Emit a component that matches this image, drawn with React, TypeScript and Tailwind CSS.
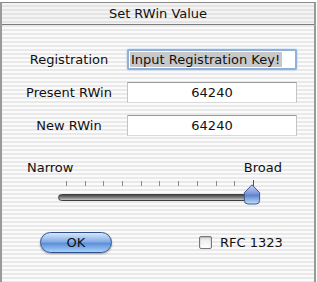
import React from "react";

const font = { fontFamily: '"DejaVu Sans", "Liberation Sans", sans-serif' };

function Field({ value, focused }: { value: string; focused?: boolean }) {
  if (focused) {
    return (
      <div className="h-[21px] w-[170px] rounded-[2px] border-2 border-[#8fb0dc] bg-white p-[1px] shadow-[0_0_2px_#9cc0ee]">
        <div className="flex h-full items-center">
          <span className="bg-[#c8c8c8] pl-[1px] pr-[2px] leading-[15px] text-[13px] text-[#111]">
            {value}
          </span>
        </div>
      </div>
    );
  }
  return (
    <div className="flex h-[21px] w-[170px] items-center justify-center border border-t-[#9a9a9a] border-x-[#c4c4c4] border-b-[#dadada] bg-white text-[13px] text-[#111]">
      {value}
    </div>
  );
}

function Thumb() {
  return (
    <svg width="18" height="21" viewBox="0 0 18 21">
      <defs>
        <linearGradient id="tg" x1="0" y1="0" x2="0" y2="1">
          <stop offset="0" stopColor="#c9d6f2" />
          <stop offset="0.45" stopColor="#7d98d9" />
          <stop offset="0.55" stopColor="#5f82cf" />
          <stop offset="1" stopColor="#bfe3fb" />
        </linearGradient>
      </defs>
      <path
        d="M9 0.8 L16.6 8.6 L16.6 16.5 Q16.6 20 13 20 L5 20 Q1.4 20 1.4 16.5 L1.4 8.6 Z"
        fill="url(#tg)"
        stroke="#3c5a8e"
        strokeWidth="1"
      />
    </svg>
  );
}

export default function App() {
  const ticks = Array.from({ length: 11 });
  return (
    <div
      className="h-[282px] w-[317px] overflow-hidden bg-white pt-[2px] text-[13px] text-[#111]"
      style={font}
    >
      <div className="mr-[1px] flex h-[280px] flex-col border-x-2 border-t border-x-[#9a9a9a] border-t-[#8a8a8a] bg-[repeating-linear-gradient(to_bottom,#fbfbfb_0px,#fbfbfb_2px,#e9e9e9_2px,#e9e9e9_4px)]">
        <div className="flex h-[22px] items-center justify-center border-b border-[#7a7a7a] bg-[repeating-linear-gradient(to_bottom,#f4f4f4_0px,#f4f4f4_2px,#e4e4e4_2px,#e4e4e4_4px)] pt-[1px]">
          Set RWin Value
        </div>

        <div className="flex flex-col gap-[12px] pt-[24px]">
          <div className="flex items-center">
            <div className="w-[125px] pl-[9px] text-center">Registration</div>
            <Field value="Input Registration Key!" focused />
          </div>
          <div className="flex items-center">
            <div className="w-[125px] pl-[9px] text-center">Present RWin</div>
            <Field value="64240" />
          </div>
          <div className="flex items-center">
            <div className="w-[125px] pl-[9px] text-center">New RWin</div>
            <Field value="64240" />
          </div>
        </div>

        <div className="mt-[24px] flex justify-between pl-[25px] pr-[32px] leading-[16px]">
          <span>Narrow</span>
          <span>Broad</span>
        </div>

        <div className="relative ml-[56px] mt-[4px] h-[26px] w-[206px]">
          <div className="ml-[8px] flex w-[188px] justify-between">
            {ticks.map((_, i) => (
              <div
                key={i}
                className={
                  i === 10 ? "h-[7px] w-[1px] bg-[#555]" : "mt-[1px] h-[5px] w-[1px] bg-[#8a8a8a]"
                }
              />
            ))}
          </div>
          <div className="mt-[7px] h-[7px] w-[196px] rounded-full border border-[#3e3e3e] bg-[linear-gradient(to_bottom,#4a4a4a,#8a8a8a_60%,#c8c8c8)]" />
          <div className="absolute left-[185px] top-[4px]">
            <Thumb />
          </div>
        </div>

        <div className="mt-[26px] flex items-center">
          <div className="ml-[38px] flex h-[21px] w-[72px] items-center justify-center rounded-full border border-[#2f4f8a] bg-[linear-gradient(to_bottom,#d6e6fb_0%,#86aee6_45%,#5d8fdc_55%,#a6d3f8_100%)] shadow-[0_1px_2px_rgba(0,0,0,0.35)]">
            OK
          </div>
          <div className="ml-[87px] flex items-center">
            <div className="h-[13px] w-[13px] rounded-[2px] border border-[#777] bg-[linear-gradient(to_bottom,#e8e8e8,#ffffff)] shadow-[inset_0_1px_2px_rgba(0,0,0,0.25)]" />
            <span className="ml-[8px]">RFC 1323</span>
          </div>
        </div>
      </div>
    </div>
  );
}
